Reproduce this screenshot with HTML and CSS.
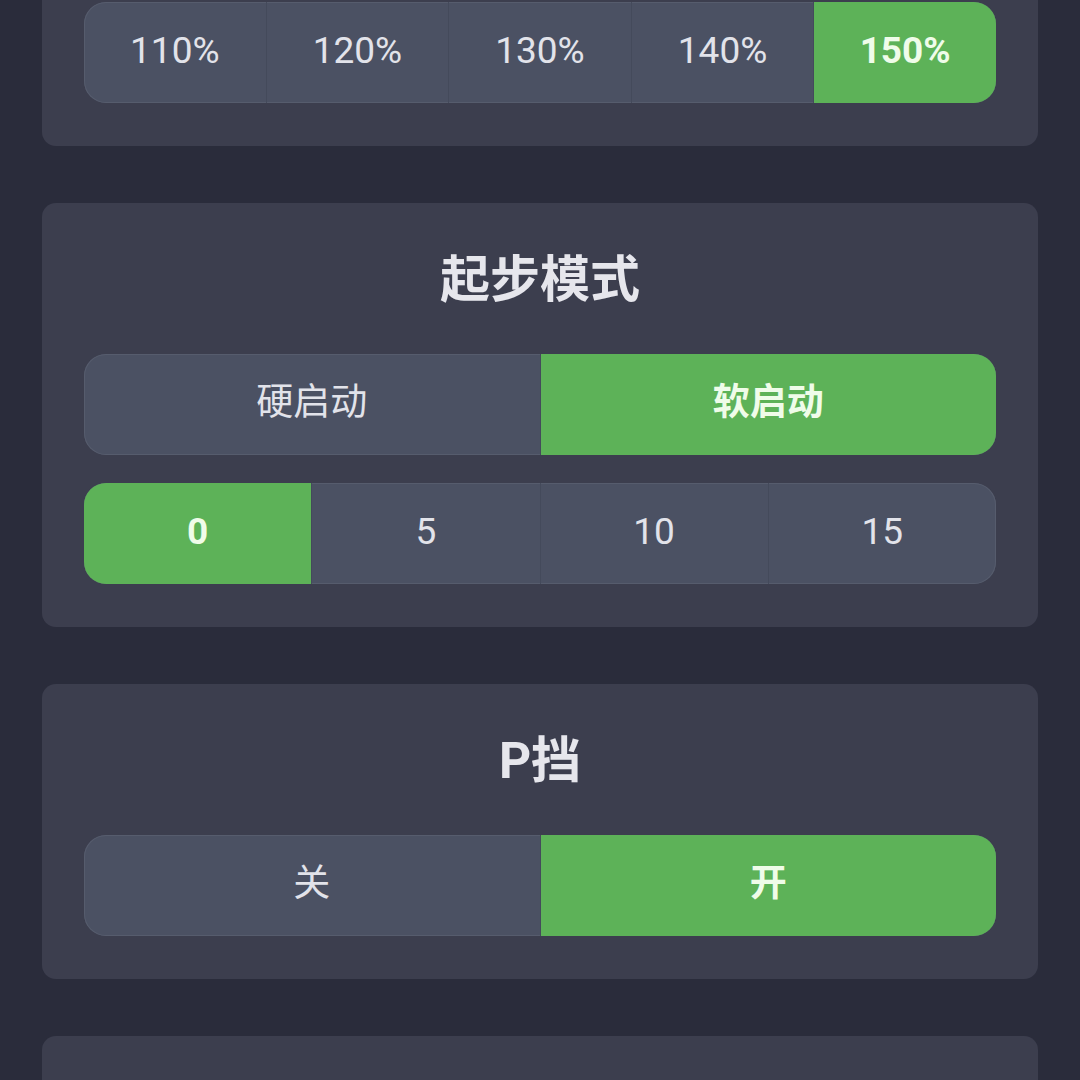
FILE: index.html
```html
<!DOCTYPE html>
<html lang="zh-CN">
  <head>
    <meta charset="UTF-8" />
    <meta name="viewport" content="width=device-width, initial-scale=1.0" />
    <title>车辆设置</title>
    <link rel="stylesheet" href="styles.css">
  </head>
  <body>
    <div class="settings">
      <div class="card">
        <div class="seg">
          <button>110%</button>
          <button>120%</button>
          <button>130%</button>
          <button>140%</button>
          <button class="on">150%</button>
        </div>
      </div>

      <div class="card">
        <h2>起步模式</h2>
        <div class="seg cjk">
          <button>硬启动</button>
          <button class="on">软启动</button>
        </div>
        <div class="seg">
          <button class="on">0</button>
          <button>5</button>
          <button>10</button>
          <button>15</button>
        </div>
      </div>

      <div class="card">
        <h2>P挡</h2>
        <div class="seg cjk">
          <button>关</button>
          <button class="on">开</button>
        </div>
      </div>

      <div class="card empty"></div>
    </div>
  </body>
</html>
```

FILE: styles.css
```css
body {
  margin: 0;
  background: #2a2c3b;
  color: #e4e4ea;
  font-family: Roboto, "Noto Sans CJK SC", sans-serif;
  overflow: hidden;
}
.settings {
  display: flex;
  flex-direction: column;
  gap: 57px;
  padding: 0 42px;
  margin-top: -40px;
}
.card {
  background: #3c3e4e;
  border-radius: 14px;
  padding: 42px 42px 43px;
  display: flex;
  flex-direction: column;
  gap: 28px;
}
.card.empty {
  height: 200px;
}
h2 {
  margin: 0 0 11px;
  height: 70px;
  line-height: 70px;
  font-size: 50px;
  font-weight: 700;
  text-align: center;
  color: #e6e6ec;
}
.seg {
  display: flex;
  height: 101px;
  border-radius: 22px;
  overflow: hidden;
  background: #4b5163;
  box-shadow: inset 0 0 0 1px #565c6d;
}
.seg button {
  flex: 1;
  border: none;
  border-left: 1px solid #444a5b;
  background: transparent;
  color: #e2e3ea;
  font-family: Roboto, "Noto Sans CJK SC", sans-serif;
  font-size: 37px;
  padding: 0 0 5px;
}
.seg.cjk button {
  padding-bottom: 12px;
}
.seg button:first-child {
  border-left: none;
}
.seg button.on {
  background: #5db258;
  color: #effce9;
  font-weight: 700;
}
```
